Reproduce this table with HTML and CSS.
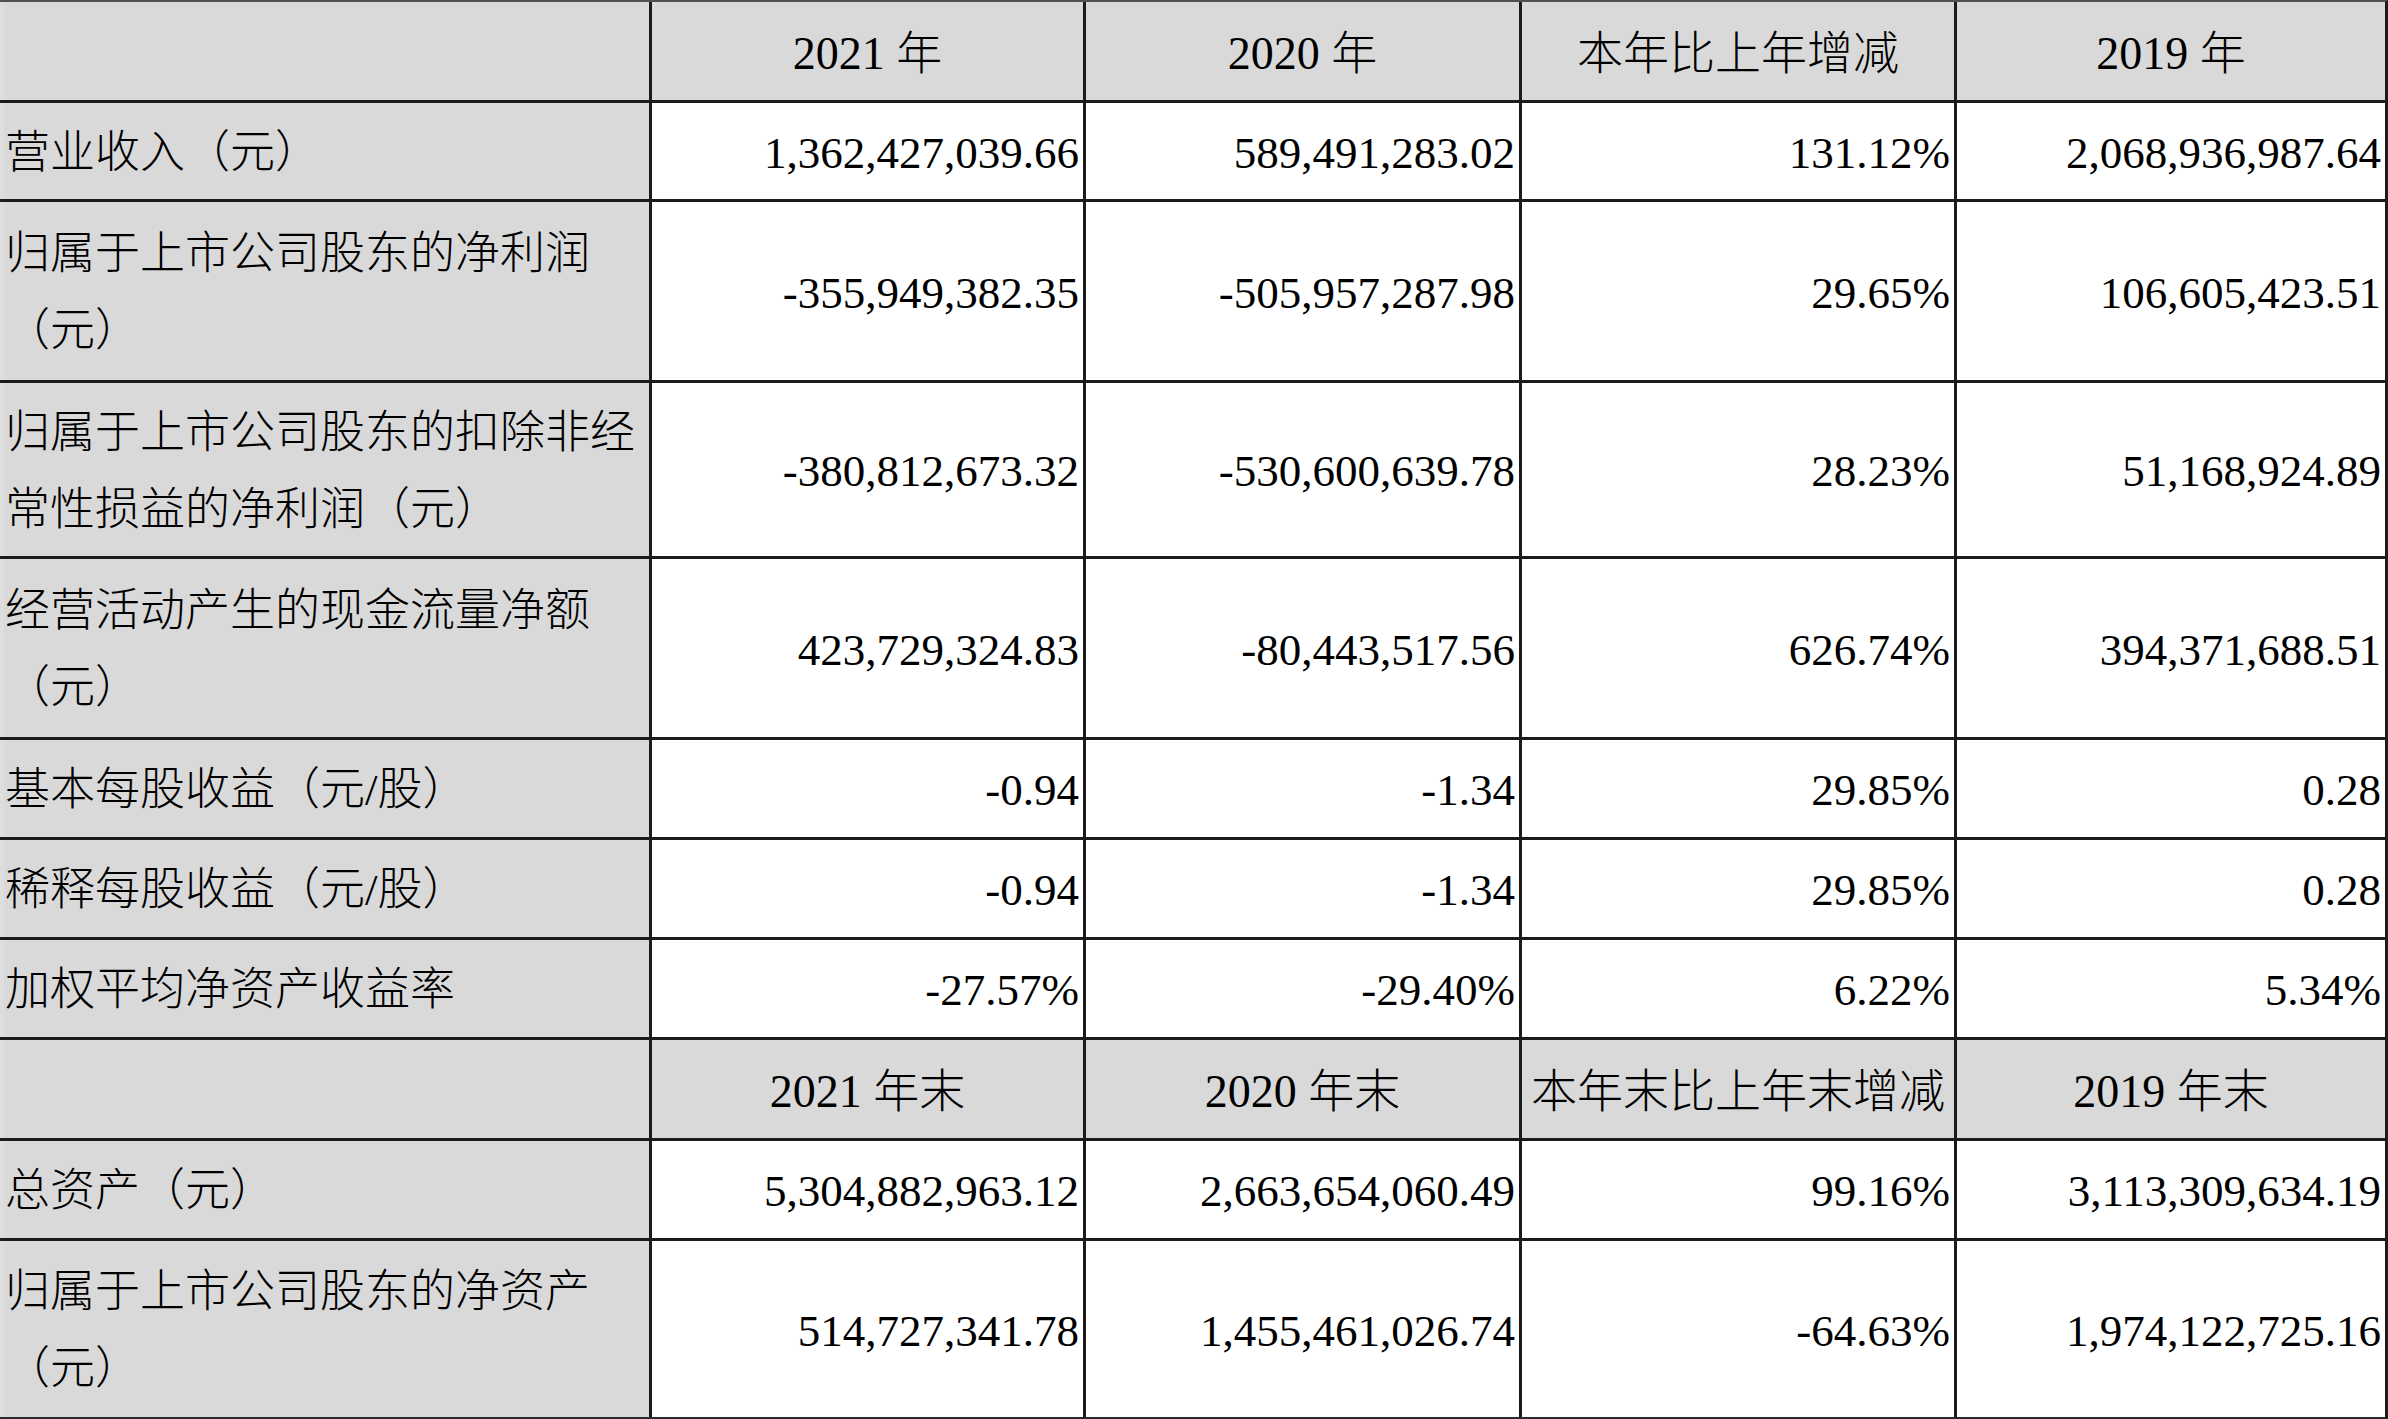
FILE: index.html
```html
<!DOCTYPE html>
<html lang="zh-CN">
<head>
<meta charset="utf-8">
<title>主要会计数据和财务指标</title>
<link rel="stylesheet" href="styles.css">
</head>
<body>
<div class="sheet" role="table">
  <div class="cell head label" role="columnheader"></div>
  <div class="cell head" role="columnheader">2021 年</div>
  <div class="cell head" role="columnheader">2020 年</div>
  <div class="cell head" role="columnheader">本年比上年增减</div>
  <div class="cell head" role="columnheader">2019 年</div>

  <div class="cell label">营业收入（元）</div>
  <div class="cell num">1,362,427,039.66</div>
  <div class="cell num">589,491,283.02</div>
  <div class="cell num">131.12%</div>
  <div class="cell num">2,068,936,987.64</div>

  <div class="cell label">归属于上市公司股东的净利润（元）</div>
  <div class="cell num">-355,949,382.35</div>
  <div class="cell num">-505,957,287.98</div>
  <div class="cell num">29.65%</div>
  <div class="cell num">106,605,423.51</div>

  <div class="cell label">归属于上市公司股东的扣除非经常性损益的净利润（元）</div>
  <div class="cell num">-380,812,673.32</div>
  <div class="cell num">-530,600,639.78</div>
  <div class="cell num">28.23%</div>
  <div class="cell num">51,168,924.89</div>

  <div class="cell label">经营活动产生的现金流量净额（元）</div>
  <div class="cell num">423,729,324.83</div>
  <div class="cell num">-80,443,517.56</div>
  <div class="cell num">626.74%</div>
  <div class="cell num">394,371,688.51</div>

  <div class="cell label">基本每股收益（元/股）</div>
  <div class="cell num">-0.94</div>
  <div class="cell num">-1.34</div>
  <div class="cell num">29.85%</div>
  <div class="cell num">0.28</div>

  <div class="cell label">稀释每股收益（元/股）</div>
  <div class="cell num">-0.94</div>
  <div class="cell num">-1.34</div>
  <div class="cell num">29.85%</div>
  <div class="cell num">0.28</div>

  <div class="cell label">加权平均净资产收益率</div>
  <div class="cell num">-27.57%</div>
  <div class="cell num">-29.40%</div>
  <div class="cell num">6.22%</div>
  <div class="cell num">5.34%</div>

  <div class="cell head label" role="columnheader"></div>
  <div class="cell head" role="columnheader">2021 年末</div>
  <div class="cell head" role="columnheader">2020 年末</div>
  <div class="cell head" role="columnheader">本年末比上年末增减</div>
  <div class="cell head" role="columnheader">2019 年末</div>

  <div class="cell label">总资产（元）</div>
  <div class="cell num">5,304,882,963.12</div>
  <div class="cell num">2,663,654,060.49</div>
  <div class="cell num">99.16%</div>
  <div class="cell num">3,113,309,634.19</div>

  <div class="cell label">归属于上市公司股东的净资产（元）</div>
  <div class="cell num">514,727,341.78</div>
  <div class="cell num">1,455,461,026.74</div>
  <div class="cell num">-64.63%</div>
  <div class="cell num">1,974,122,725.16</div>
</div>
</body>
</html>
```
FILE: styles.css
```css
html, body {
  margin: 0;
  padding: 0;
  background: #ffffff;
}

.sheet {
  display: grid;
  grid-template-columns: 649px 431px 433px 432px 428px;
  grid-template-rows: 98px 96px 178px 173px 178px 97px 97px 97px 98px 97px 176px;
  gap: 3px;
  width: 2385px;
  background: #1b1b1b;
  border-top: 2px solid #505050;
  border-bottom: 2px solid #2a2a2a;
  border-right: 3px solid #1b1b1b;
  font-family: "Liberation Serif", "Noto Sans CJK SC", serif;
  font-size: 45px;
  font-weight: 300;
  color: #000000;
}

.cell {
  display: flex;
  align-items: center;
  background: #ffffff;
  line-height: 77px;
  padding-top: 4px;
  box-sizing: border-box;
  overflow: hidden;
}

.head {
  background: #d9d9d9;
  justify-content: center;
  font-size: 46px;
}

.label {
  background: #d9d9d9;
  padding-left: 1px;
  padding-right: 4px;
  border-left: 4px solid #dedede;
}

.num {
  justify-content: flex-end;
  padding-right: 4px;
  font-size: 45px;
}
```
